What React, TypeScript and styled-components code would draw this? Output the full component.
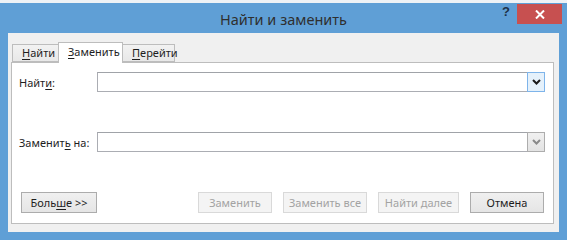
import React from "react";
import { styled, createGlobalStyle } from "styled-components";

const GlobalStyle = createGlobalStyle`
  html, body {
    margin: 0;
    padding: 0;
    background: #ffffff;
  }
  * {
    box-sizing: border-box;
  }
`;

const FONT = `"Noto Sans", "Open Sans", "Liberation Sans", sans-serif`;

const Frame = styled.div`
  width: 567px;
  height: 240px;
  display: flex;
  flex-direction: column;
  background: #5f9fd6;
  border-top: 3px solid #eef2f6;
  font-family: ${FONT};
  font-size: 11px;
  color: #1e1e1e;
`;

const TitleBar = styled.div`
  position: relative;
  height: 30px;
  display: flex;
  align-items: center;
  justify-content: center;
`;

const Title = styled.div`
  font-size: 14.5px;
  color: #2f2f2f;
  margin-top: 1px;
`;

const TitleButtons = styled.div`
  position: absolute;
  top: 1px;
  right: 5px;
  display: flex;
  align-items: flex-start;
  gap: 5px;
`;

const HelpButton = styled.div`
  font-family: "Liberation Sans", sans-serif;
  font-weight: bold;
  font-size: 13px;
  color: #1d3147;
  line-height: 20px;
  width: 12px;
  text-align: center;
  margin-top: -2px;
`;

const CloseButton = styled.div`
  width: 45px;
  height: 20px;
  background: #c75050;
  display: flex;
  align-items: center;
  justify-content: center;
`;

const Client = styled.div`
  height: 199px;
  margin: 0 8px;
  background: #f0f0f0;
  padding: 9px 5px 0 3px;
  display: flex;
  flex-direction: column;
`;

const TabStrip = styled.div`
  display: flex;
  align-items: flex-end;
  padding-left: 1px;
  height: 20px;
  position: relative;
  z-index: 1;
`;

const Tab = styled.div<{ $active?: boolean; $width: number }>`
  width: ${(p) => p.$width}px;
  height: ${(p) => (p.$active ? 21 : 18)}px;
  margin-bottom: ${(p) => (p.$active ? -1 : 0)}px;
  border: 1px solid #bdbdbd;
  border-bottom: ${(p) => (p.$active ? "none" : "1px solid #bdbdbd")};
  margin-left: ${(p) => (p.$active ? -1 : 0)}px;
  margin-right: ${(p) => (p.$active ? -1 : 0)}px;
  background: ${(p) => (p.$active ? "#ffffff" : "linear-gradient(#f2f2f2, #e8e8e8)")};
  padding-left: 9px;
  line-height: ${(p) => (p.$active ? 18 : 15)}px;
  position: relative;
  z-index: ${(p) => (p.$active ? 2 : 0)};
`;

const Key = styled.span`
  text-decoration: underline;
  text-underline-offset: 2px;
`;

const Panel = styled.div`
  height: 162px;
  background: #ffffff;
  border: 1px solid #bdbdbd;
  padding: 9px 8px 10px 7px;
  display: flex;
  flex-direction: column;
`;

const Fields = styled.div`
  display: grid;
  grid-template-columns: 78px 1fr;
  row-gap: 40px;
  align-items: center;
`;

const Label = styled.div`
  white-space: nowrap;
`;

const Combo = styled.div`
  height: 20px;
  display: flex;
  border: 1px solid #abadb3;
  border-top-color: #a0a3a8;
  background: #ffffff;
`;

const ComboInput = styled.div`
  flex: 1;
`;

const DropButton = styled.div<{ $focus?: boolean }>`
  width: 18px;
  margin: -1px -1px -1px 0;
  border: 1px solid ${(p) => (p.$focus ? "#7eb4ea" : "#adadad")};
  background: ${(p) => (p.$focus ? "#e5f1fb" : "linear-gradient(#f0f0f0, #e3e3e3)")};
  display: flex;
  align-items: center;
  justify-content: center;
`;

const Spacer = styled.div`
  flex: 1;
`;

const ButtonRow = styled.div`
  display: flex;
  align-items: center;
  justify-content: space-between;
  padding-left: 2px;
  padding-right: 1px;
`;

const ButtonGroup = styled.div`
  display: flex;
  gap: 11px;
`;

const Button = styled.div<{ $disabled?: boolean; $width: number }>`
  width: ${(p) => p.$width}px;
  height: 21px;
  display: flex;
  align-items: center;
  justify-content: center;
  border: 1px solid ${(p) => (p.$disabled ? "#d9d9d9" : "#acacac")};
  background: ${(p) => (p.$disabled ? "#f4f4f4" : "linear-gradient(#f0f0f0, #e5e5e5)")};
  color: ${(p) => (p.$disabled ? "#a3a3a3" : "#1e1e1e")};
  white-space: nowrap;
`;

const BottomEdge = styled.div`
  flex: 1;
`;

const Chevron: React.FC<{ color: string }> = ({ color }) => (
  <svg width="9" height="6" viewBox="0 0 9 6">
    <polyline points="1,1 4.5,4.5 8,1" fill="none" stroke={color} strokeWidth="2" />
  </svg>
);

const App: React.FC = () => {
  return (
    <>
      <GlobalStyle />
      <Frame>
        <TitleBar>
          <Title>Найти и заменить</Title>
          <TitleButtons>
            <HelpButton>?</HelpButton>
            <CloseButton>
              <svg width="10" height="9" viewBox="0 0 10 9">
                <path d="M1 0.5 L9 8.5 M9 0.5 L1 8.5" stroke="#ffffff" strokeWidth="2" />
              </svg>
            </CloseButton>
          </TitleButtons>
        </TitleBar>
        <Client>
          <TabStrip>
            <Tab $width={47}>
              <Key>Н</Key>айти
            </Tab>
            <Tab $width={65} $active>
              <Key>З</Key>аменить
            </Tab>
            <Tab $width={53}>
              <Key>П</Key>ерейти
            </Tab>
          </TabStrip>
          <Panel>
            <Fields>
              <Label>
                Найт<Key>и</Key>:
              </Label>
              <Combo>
                <ComboInput />
                <DropButton $focus>
                  <Chevron color="#1a1a1a" />
                </DropButton>
              </Combo>
              <Label>
                Заменит<Key>ь</Key> на:
              </Label>
              <Combo>
                <ComboInput />
                <DropButton>
                  <Chevron color="#8a8a8a" />
                </DropButton>
              </Combo>
            </Fields>
            <Spacer />
            <ButtonRow>
              <Button $width={76}>
                Боль<Key>ш</Key>е &gt;&gt;
              </Button>
              <ButtonGroup>
                <Button $width={74} $disabled>
                  Заменить
                </Button>
                <Button $width={84} $disabled>
                  Заменить все
                </Button>
                <Button $width={81} $disabled>
                  Найти далее
                </Button>
                <Button $width={74}>Отмена</Button>
              </ButtonGroup>
            </ButtonRow>
          </Panel>
        </Client>
        <BottomEdge />
      </Frame>
    </>
  );
};

export default App;
